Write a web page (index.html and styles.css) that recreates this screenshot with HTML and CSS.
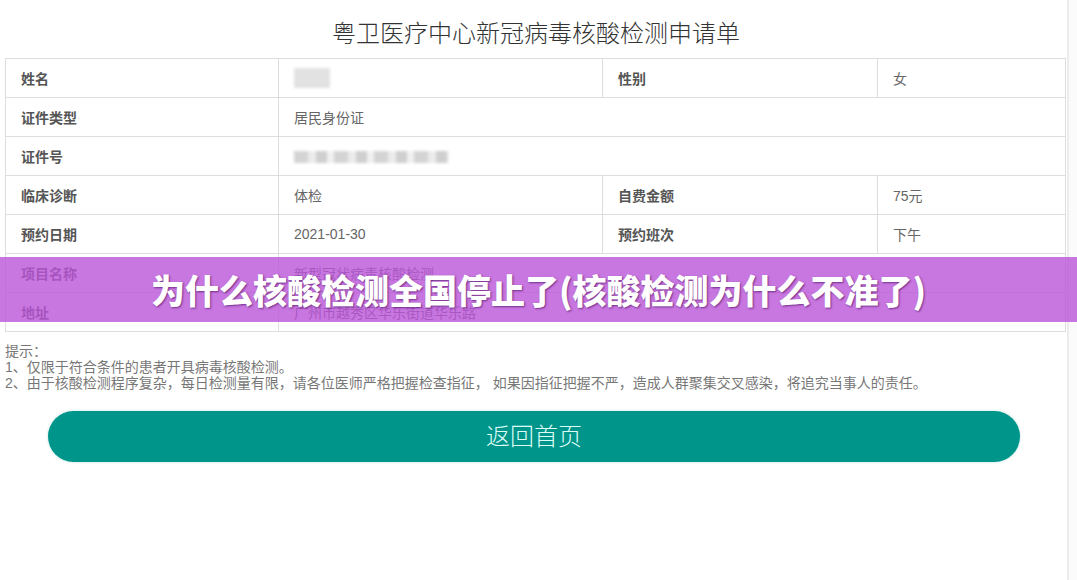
FILE: index.html
```html
<!DOCTYPE html>
<html lang="zh-CN">
<head>
	<meta charset="UTF-8" />
	<title>核酸检测申请单</title>
	<link rel="stylesheet" href="styles.css">
</head>
<body>
	<div class="page">
		<div class="main">
			<h1 class="title">粤卫医疗中心新冠病毒核酸检测申请单</h1>
			<table class="form">
				<colgroup>
					<col class="c1" /><col class="c2" /><col class="c3" /><col class="c4" />
				</colgroup>
				<tr>
					<th>姓名</th>
					<td><span class="blur name"></span></td>
					<th>性别</th>
					<td>女</td>
				</tr>
				<tr>
					<th>证件类型</th>
					<td colspan="3">居民身份证</td>
				</tr>
				<tr>
					<th>证件号</th>
					<td colspan="3"><span class="blur idno"></span></td>
				</tr>
				<tr>
					<th>临床诊断</th>
					<td>体检</td>
					<th>自费金额</th>
					<td>75元</td>
				</tr>
				<tr>
					<th>预约日期</th>
					<td>2021-01-30</td>
					<th>预约班次</th>
					<td>下午</td>
				</tr>
				<tr>
					<th>项目名称</th>
					<td colspan="3">新型冠状病毒核酸检测</td>
				</tr>
				<tr>
					<th>地址</th>
					<td colspan="3">广州市越秀区华乐街道华乐路</td>
				</tr>
			</table>
			<div class="tips">
				提示：<br />
				1、仅限于符合条件的患者开具病毒核酸检测。<br />
				2、由于核酸检测程序复杂，每日检测量有限，请各位医师严格把握检查指征， 如果因指征把握不严，造成人群聚集交叉感染，将追究当事人的责任。
			</div>
			<a class="back" href="#">返回首页</a>
		</div>
		<div class="rail"></div>
	</div>
	<div class="banner">为什么核酸检测全国停止了(核酸检测为什么不准了)</div>
</body>
</html>
```

FILE: styles.css
```css
body {
	margin: 0;
	background: #fff;
	font-family: "Liberation Sans", "Noto Sans CJK SC", sans-serif;
	color: #666;
}
.page {
	display: flex;
	height: 580px;
}
.main {
	flex: 1;
	padding: 0 0 0 5px;
}
.rail {
	width: 8px;
	border-left: 2px solid #ececec;
	background: #fbfbfb;
}
.title {
	margin: 0;
	padding-top: 19px;
	height: 39px;
	font-size: 24px;
	line-height: 30px;
	font-weight: 300;
	color: #333;
	text-align: center;
}
.form {
	width: 1060px;
	table-layout: fixed;
	border-collapse: collapse;
	border: 1px solid #dcdcdc;
	font-size: 14px;
}
.c1 { width: 273px; }
.c2 { width: 324px; }
.c3 { width: 275px; }
.c4 { width: 188px; }
.form th, .form td {
	height: 38px;
	padding: 0 0 0 15px;
	border: 1px solid #dedede;
	text-align: left;
	vertical-align: middle;
}
.form th {
	font-weight: bold;
	color: #555;
}
.form td {
	color: #666;
}
.blur {
	display: inline-block;
	vertical-align: middle;
	background: #e2e2e2;
	filter: blur(1.5px);
}
.blur.name {
	width: 36px;
	height: 20px;
}
.blur.idno {
	width: 155px;
	height: 12px;
	background: repeating-linear-gradient(90deg, #d4d4d4 0 14px, #ececec 14px 22px, #cfcfcf 22px 33px, #f0f0f0 33px 40px);
}
.tips {
	padding-top: 11px;
	font-size: 14px;
	line-height: 16px;
	color: #777;
	white-space: nowrap;
}
.back {
	display: block;
	margin: 20px 0 0 43px;
	width: 972px;
	height: 51px;
	border-radius: 26px;
	background: #00958a;
	box-shadow: 0 0 3px rgba(0, 150, 136, 0.25);
	color: #dcfcf8;
	font-size: 24px;
	line-height: 51px;
	font-weight: 300;
	text-align: center;
	text-decoration: none;
}
.banner {
	position: absolute;
	left: 0;
	top: 257px;
	width: 100%;
	height: 65px;
	background: rgba(186, 84, 216, 0.8);
	color: #fff;
	font-family: "Noto Sans CJK SC", sans-serif;
	font-size: 34px;
	font-weight: 900;
	line-height: 65px;
	text-align: center;
	text-shadow: 1px 1px 2px rgba(60, 0, 80, 0.6);
}
```
